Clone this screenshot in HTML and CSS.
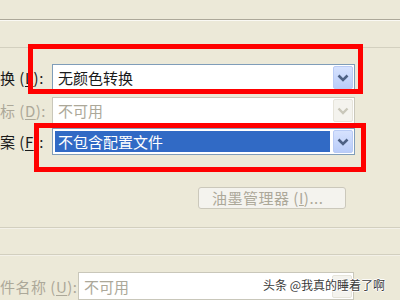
FILE: index.html
```html
<!DOCTYPE html>
<html lang="zh-CN">
<head>
<meta charset="utf-8">
<link rel="stylesheet" href="styles.css">
</head>
<body>
<div class="dialog">
  <div class="top"></div>
  <div class="group">
    <div class="row r1">
      <span class="label">换 (<u>L</u>):</span>
      <div class="combo">
        <span class="val">无颜色转换</span>
        <span class="drop"><svg width="20" height="23" viewBox="0 0 20 23"><path d="M5.5 9.5 L10 14 L14.5 9.5" fill="none" stroke="#4D6185" stroke-width="2.6"/></svg></span>
      </div>
    </div>
    <div class="row r2 disabled">
      <span class="label">标 (<u>D</u>):</span>
      <div class="combo">
        <span class="val">不可用</span>
        <span class="drop"><svg width="20" height="23" viewBox="0 0 20 23"><path d="M5.5 9.5 L10 14 L14.5 9.5" fill="none" stroke="#C9C7BA" stroke-width="2.4"/></svg></span>
      </div>
    </div>
    <div class="row r3">
      <span class="label">案 (<u>F</u>):</span>
      <div class="combo">
        <span class="val sel">不包含配置文件</span>
        <span class="drop"><svg width="20" height="23" viewBox="0 0 20 23"><path d="M5.5 9.5 L10 14 L14.5 9.5" fill="none" stroke="#4D6185" stroke-width="2.6"/></svg></span>
      </div>
    </div>
    <div class="btnrow">
      <button class="xpbtn" disabled>油墨管理器 (<u>I</u>)...</button>
    </div>
  </div>
  <div class="sep"></div>
  <div class="sep sep2"></div>
  <div class="row r4 disabled">
    <span class="label">件名称 (<u>U</u>):</span>
    <div class="combo">
      <span class="val">不可用</span>
      <span class="drop"></span>
    </div>
  </div>
  <div class="mark">头条 @我真的睡着了啊</div>
  <div class="anno a1"></div>
  <div class="anno a2"></div>
</div>
</body>
</html>
```
FILE: styles.css
```css
html, body {
  margin: 0;
  padding: 0;
  background: #ECE9D8;
}
body {
  width: 400px;
  height: 300px;
  overflow: hidden;
  font-family: "Noto Sans CJK SC", "Liberation Sans", sans-serif;
  font-size: 15px;
  color: #1a1a1a;
}
.dialog {
  position: relative;
  width: 400px;
  height: 300px;
  overflow: hidden;
}
.top {
  height: 19px;
  border-bottom: 1px solid #ACA899;
  box-shadow: 0 1px 0 #FAF9F4;
}
.group {
  margin-top: 27px;
  border-top: 1px solid #D3D0BF;
  padding-top: 16px;
  padding-bottom: 18px;
}
.row {
  display: flex;
  align-items: center;
  height: 27px;
}
.r2 { margin-top: 6px; }
.r3 { margin-top: 4px; }
.label {
  width: 52px;
  flex: none;
  white-space: nowrap;
  overflow: hidden;
  letter-spacing: 0.5px;
}
.label u { text-decoration-thickness: 1px; text-underline-offset: 2px; }
.combo {
  width: 303px;
  height: 27px;
  box-sizing: border-box;
  border: 1px solid #7F9DB9;
  background: #fff;
  display: flex;
  align-items: center;
  padding: 2px 1px 2px 2px;
}
.val {
  flex: 1;
  height: 21px;
  line-height: 21px;
  padding-left: 3px;
  white-space: nowrap;
  overflow: hidden;
}
.val.sel {
  background: #316AC5;
  color: #fff;
  margin-right: 3px;
}
.drop {
  width: 20px;
  height: 23px;
  flex: none;
  box-sizing: border-box;
  border: 1px solid #B9CBF5;
  border-radius: 2px;
  background: linear-gradient(#D6E2FE, #BACDF9);
  display: flex;
}
.drop svg { display: block; margin: -1px; }
.disabled .label { color: #ACA899; }
.disabled .combo { border-color: #C9C7BA; }
.disabled .val { color: #ACA899; }
.disabled .drop {
  border-color: #E6E4DA;
  background: #F4F3EE;
}
.btnrow {
  display: flex;
  justify-content: flex-end;
  padding-right: 54px;
  margin-top: 32px;
}
.xpbtn {
  width: 148px;
  height: 22px;
  box-sizing: border-box;
  border: 1px solid #CBC8BB;
  border-radius: 3px;
  background: #F4F3EE;
  color: #ACA899;
  font-family: inherit;
  font-size: 15px;
  text-align: left;
  padding: 0 0 0 13px;
  line-height: 20px;
  letter-spacing: 0.5px;
}
.sep {
  height: 1px;
  background: #D2CFBF;
  box-shadow: 0 1px 0 #F3F1E8;
}
.sep2 { margin-top: 26px; }
.r4 { margin-top: 17px; height: 28px; }
.r4 .label { width: 78px; }
.r4 .combo { width: 276px; height: 28px; }
.mark {
  position: absolute;
  right: 15px;
  bottom: 7px;
  font-size: 12px;
  color: #3a3a3a;
  text-shadow: 1px 0 0 #fff, -1px 0 0 #fff, 0 1px 0 #fff, 0 -1px 0 #fff;
  white-space: nowrap;
}
.anno {
  position: absolute;
  border: 5px solid #F00;
  box-sizing: border-box;
}
.a1 { left: 28px; top: 44px; width: 335px; height: 50px; }
.a2 { left: 34px; top: 123px; width: 332px; height: 49px; }
```
